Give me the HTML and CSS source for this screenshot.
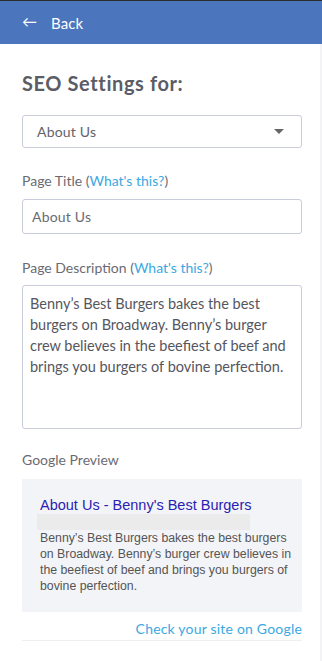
FILE: index.html
```html
<!DOCTYPE html>
<html>
<head>
<meta charset="utf-8">
<link rel="stylesheet" href="styles.css">
</head>
<body>
<div class="topline"></div>
<header class="bar">
  <span class="arrow">&larr;</span>
  <span class="back">Back</span>
</header>
<main class="panel">
  <h1 class="title">SEO Settings for:</h1>
  <div class="select">
    <span>About Us</span>
    <span class="caret"></span>
  </div>
  <label class="label">Page Title (<a class="link">What's this?</a>)</label>
  <div class="input">About Us</div>
  <label class="label">Page Description (<a class="link">What's this?</a>)</label>
  <div class="textarea">Benny’s Best Burgers bakes the best burgers on Broadway. Benny’s burger crew believes in the beefiest of beef and brings you burgers of bovine perfection.</div>
  <div class="label gp">Google Preview</div>
  <div class="preview">
    <div class="ptitle">About Us - Benny's Best Burgers</div>
    <div class="purl"></div>
    <div class="pdesc">Benny’s Best Burgers bakes the best burgers on Broadway. Benny’s burger crew believes in the beefiest of beef and brings you burgers of bovine perfection.</div>
  </div>
  <div class="check"><a class="link">Check your site on Google</a></div>
  <div class="rule"></div>
</main>
</body>
</html>
```
FILE: styles.css
```css
html, body { margin: 0; padding: 0; }
body {
  width: 322px;
  height: 661px;
  overflow: hidden;
  background: #fff;
  font-family: Lato, "Open Sans", sans-serif;
  color: #5f6068;
  position: relative;
}
body::after {
  content: "";
  position: absolute;
  right: 0;
  top: 44px;
  bottom: 0;
  width: 2px;
  background: #f3f3f5;
}
.topline { height: 1px; background: #2b2b2b; }
.bar {
  height: 43px;
  background: #4b75bc;
  color: #fff;
  display: flex;
  align-items: center;
  padding-left: 22px;
  box-sizing: border-box;
}
.arrow { font-size: 15px; width: 29px; line-height: 1; margin-top: -2px; }
.back { font-size: 15px; letter-spacing: 0.1px; }
.panel { padding: 0 20px 0 22px; display: flex; flex-direction: column; }
.title {
  margin: 27px 0 0;
  font-size: 20px;
  font-weight: 700;
  color: #5b5c65;
  line-height: 24px;
  letter-spacing: 0.6px;
}
.select {
  margin-top: 20px;
  height: 33px;
  border: 1px solid #c8ccdb;
  border-radius: 3px;
  box-sizing: border-box;
  display: flex;
  align-items: center;
  justify-content: space-between;
  padding: 0 17px 0 14px;
  font-size: 14px;
  letter-spacing: 0.2px;
  color: #62636b;
}
.caret {
  width: 0; height: 0;
  border-left: 5px solid transparent;
  border-right: 5px solid transparent;
  border-top: 5px solid #666;
}
.label {
  display: block;
  font-size: 14px;
  color: #6a6b72;
  line-height: 18px;
  margin-top: 24px;
}
.link { color: #3aa9e3; text-decoration: none; }
.input {
  margin-top: 9px;
  height: 35px;
  border: 1px solid #c8ccdb;
  border-radius: 3px;
  box-sizing: border-box;
  display: flex;
  align-items: center;
  padding-left: 9px;
  font-size: 14px;
  letter-spacing: 0.2px;
  color: #6a6b72;
}
.input + .label { margin-top: 25px; }
.textarea {
  margin-top: 8px;
  height: 144px;
  border: 1px solid #c8ccdb;
  border-radius: 3px;
  box-sizing: border-box;
  padding: 7px 8px 0 7px;
  font-size: 14.5px;
  line-height: 21px;
  color: #55565e;
}
.gp { margin-top: 22px; }
.preview {
  margin-top: 10px;
  background: #f3f4f8;
  height: 133px;
  box-sizing: border-box;
  padding: 17px 6px 0 18px;
  font-family: "Liberation Sans", Arial, sans-serif;
}
.ptitle { color: #2a1db2; font-size: 14.5px; line-height: 18px; }
.purl {
  height: 16px;
  background: #ebebeb;
  margin: 0 0 0 -3px;
  width: 213px;
}
.pdesc {
  font-size: 12.3px;
  line-height: 16px;
  color: #555;
}
.check {
  text-align: right;
  font-size: 14px;
  margin-top: 8px;
  line-height: 18px;
  letter-spacing: 0.2px;
}
.rule { margin-top: 2px; height: 1px; background: #eeeff2; }
```
